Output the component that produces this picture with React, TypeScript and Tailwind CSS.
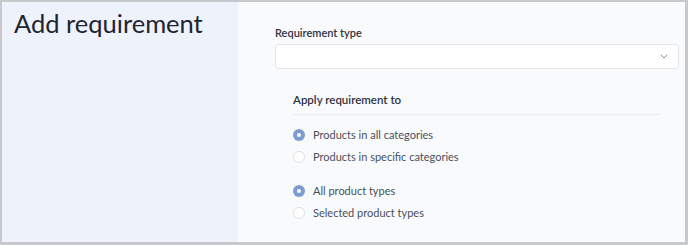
const Radio = ({ checked, label }: { checked?: boolean; label: string }) => (
    <label className="flex items-center gap-[8px] h-[22px]">
        {checked ? (
            <span className="w-[12px] h-[12px] rounded-full bg-[#7b9bd3] flex items-center justify-center">
                <span className="w-[4px] h-[4px] rounded-full bg-white" />
            </span>
        ) : (
            <span className="w-[12px] h-[12px] rounded-full bg-white border border-[#dcdfe3]" />
        )}
        <span className="text-[11px] text-[#4a4f5a]">{label}</span>
    </label>
);

export default function App() {
    return (
        <div
            className="w-[688px] h-[245px] border-t-2 border-l-2 border-b-[3px] border-r-[3px] border-[#c7c9cc] flex"
            style={{ fontFamily: 'Lato, "Open Sans", sans-serif' }}
        >
            {/* Left title column */}
            <div className="w-[236px] bg-[#eef2fb] px-[12px] pt-[5px]">
                <h1 className="text-[25.5px] leading-[32px] text-[#1f2431]">Add requirement</h1>
            </div>

            {/* Form */}
            <div className="flex-1 bg-[#f9fafc] pl-[37px] pr-[6px] pt-[23px]">
                <div className="text-[11px] font-semibold text-[#2f333d] leading-[16px]">Requirement type</div>
                <div className="mt-[3px] h-[25px] bg-white border border-[#e3e5e9] rounded-[3px] flex items-center justify-end pr-[10px]">
                    <svg width="8" height="5" viewBox="0 0 8 5" fill="none">
                        <path d="M1 1l3 3 3-3" stroke="#8a8f99" strokeWidth="1" strokeLinecap="round" />
                    </svg>
                </div>

                <div className="ml-[18px] mr-[18px] mt-[23px]">
                    <div className="text-[11.5px] font-semibold text-[#2f333d] leading-[16px] pb-[6px] border-b border-[#ebedf0]">
                        Apply requirement to
                    </div>
                    <div className="mt-[9px]">
                        <Radio checked label="Products in all categories" />
                        <Radio label="Products in specific categories" />
                    </div>
                    <div className="mt-[12px]">
                        <Radio checked label="All product types" />
                        <Radio label="Selected product types" />
                    </div>
                </div>
            </div>
        </div>
    );
}
